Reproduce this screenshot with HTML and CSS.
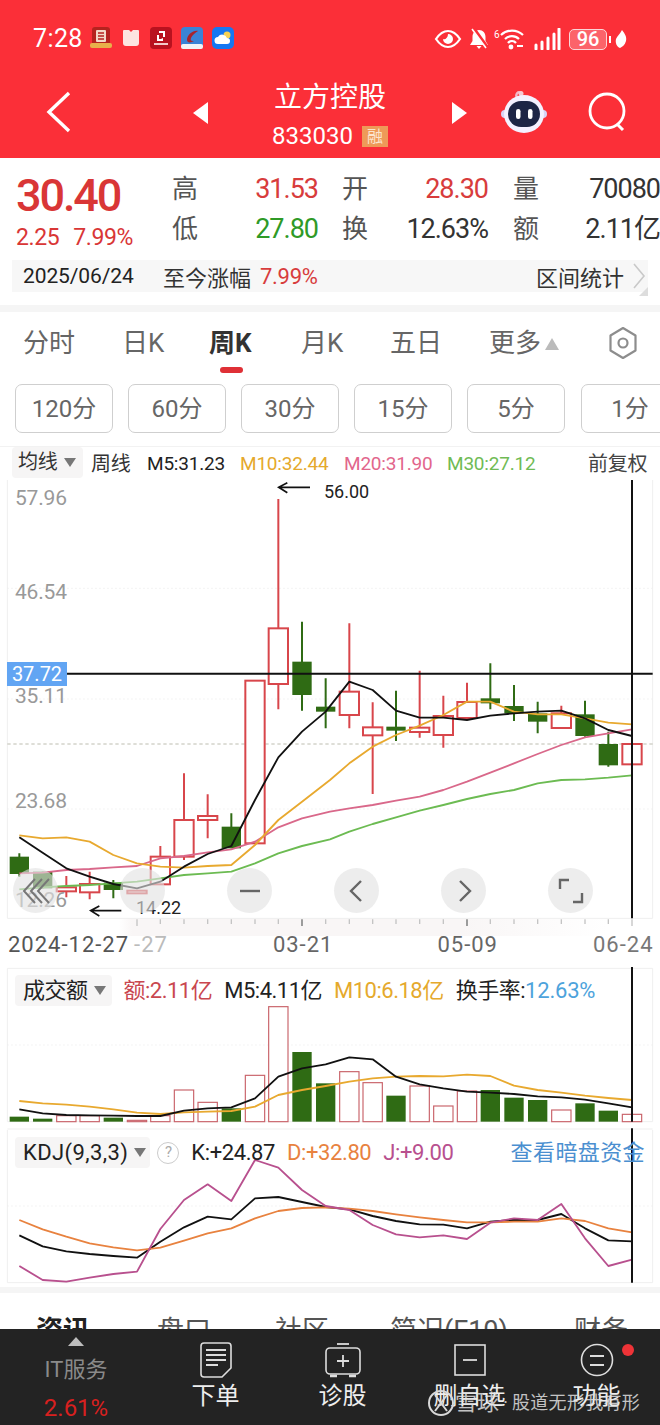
FILE: index.html
```html
<!DOCTYPE html>
<html lang="zh">
<head>
    <meta charset="UTF-8">
    <meta name="viewport" content="width=device-width, initial-scale=1.0">
    <title>立方控股</title>
    <link rel="stylesheet" href="styles.css">
</head>
<body>
<div class="screen">
    <header class="header">
        <div class="status">
            <span class="time">7:28</span>
            <div class="apps">
                <svg width="22" height="22" viewBox="0 0 22 22"><rect x="2" y="0" width="18" height="20" rx="3" fill="#b5231f"/><rect x="6" y="3" width="10" height="12" rx="1" fill="#f3d9c8"/><path d="M8 6h6M8 9h6M8 12h6" stroke="#b5231f" stroke-width="1.4"/><rect x="0" y="16" width="22" height="5" rx="2" fill="#e8b04a"/></svg>
                <svg width="20" height="20" viewBox="0 0 20 20"><path d="M3 2h5l2 2 2-2h5a1 1 0 0 1 1 1v12a3 3 0 0 1-3 3H5a3 3 0 0 1-3-3V3a1 1 0 0 1 1-1Z" fill="#fde4e0"/></svg>
                <svg width="22" height="22" viewBox="0 0 22 22"><rect width="22" height="22" rx="4" fill="#b9121f"/><path d="M9 4h6v6h-2V6H9ZM13 11v3H7V8h2v4h2" fill="#fff"/><path d="M4 17h14" stroke="#f4c9c9" stroke-width="2"/></svg>
                <svg width="22" height="22" viewBox="0 0 22 22"><rect width="22" height="22" rx="4" fill="#3a83d6"/><path d="M17 4C12 3 6 8 6 13c0 3 4 3 7 1-2 0-4 0-3-3 1-3 4-5 7-7Z" fill="#a8242c"/><rect y="17" width="22" height="5" rx="2" fill="#f2f4f7"/></svg>
                <svg width="22" height="22" viewBox="0 0 22 22"><rect width="22" height="22" rx="5" fill="#1677f2"/><circle cx="15" cy="8" r="3.5" fill="#f7d154"/><path d="M6 17a3.500 3.500 0 0 1 0-7 5 5 0 0 1 9 1 3 3 0 0 1 0 6Z" fill="#fff"/></svg>
            </div>
            <div class="sys-icons">
                <svg class="eye" width="28" height="20" viewBox="0 0 28 20"><path d="M2 10C6 4 10 2 14 2s8 2 12 8c-4 6-8 8-12 8S6 16 2 10Z" fill="none" stroke="#fff" stroke-width="2.2"/><path d="M14 5a5 5 0 1 1-5 5c2 1 5-1 5-5Z" fill="#fff"/></svg>
                <svg class="bell" width="20" height="22" viewBox="0 0 20 22"><path d="M10 2c4 0 6.500 3 6.500 7v4l2.500 4H1l2.500-4V9C3.500 5 6 2 10 2Z" fill="#fff"/><path d="M7.500 18h5l-2.500 3Z" fill="#fff"/><path d="M5 1l13 18" stroke="#fb2f38" stroke-width="3.500"/><path d="M3 1l14 19" stroke="#fff" stroke-width="1.600"/></svg>
                <span class="wifi-six">6</span>
                <svg class="wifi" width="24" height="21" viewBox="0 0 24 21"><path d="M1 6a16 16 0 0 1 22 0M5 10a10 10 0 0 1 14 0M8 14a5 5 0 0 1 8 0" fill="none" stroke="#fff" stroke-width="2.2"/><circle cx="11" cy="18" r="2.400" fill="#fff"/><path d="M17 17h6" stroke="#fff" stroke-width="2"/></svg>
                <svg class="signal" width="27" height="22" viewBox="0 0 27 22"><path d="M2 17v4M8 14v7M14 10v11M20 6v15M25 1v20" stroke="#fff" stroke-width="3" stroke-linecap="round"/></svg>
                <span class="battery">96</span>
                <span class="battery-nub"></span>
                <svg class="leaf" width="12" height="20" viewBox="0 0 12 20"><path d="M7 1c3 4 5 7 4 11-1 4-4 6-6 7-3-1-5-5-4-9 1-3 4-5 6-9Z" fill="#fff"/></svg>
            </div>
        </div>
        <div class="nav">
            <svg class="back" width="26" height="42" viewBox="0 0 26 42"><path d="M23 2 3 21l20 19" fill="none" stroke="#fff" stroke-width="3.4"/></svg>
            <span class="tri tri-left"></span>
            <div class="nav-title">
                <div class="stock-name">立方控股</div>
                <div class="stock-code">833030<span class="rong">融</span></div>
            </div>
            <span class="tri tri-right"></span>
            <svg class="robot" width="46" height="44" viewBox="0 0 46 44">
                <path d="M16 8c-2-4 1-7 4-5" fill="none" stroke="#f2b8c8" stroke-width="2.4"/>
                <circle cx="20" cy="3.500" r="2.500" fill="#f6c9d4"/>
                <circle cx="4" cy="24" r="4" fill="#d9d4f6"/>
                <circle cx="42" cy="24" r="4" fill="#d9d4f6"/>
                <ellipse cx="23" cy="24" rx="20" ry="19" fill="#f4f1ff"/>
                <rect x="7" y="11" width="32" height="26" rx="13" fill="#1d2545"/>
                <rect x="15" y="19" width="4.500" height="10" rx="2.200" fill="#fff"/>
                <rect x="27" y="19" width="4.500" height="10" rx="2.200" fill="#fff"/>
            </svg>
            <svg class="search" width="42" height="42" viewBox="0 0 42 42"><circle cx="19" cy="19" r="17" fill="none" stroke="#fff" stroke-width="2.8"/><path d="M29 32l6 6" stroke="#fff" stroke-width="3"/></svg>
        </div>
    </header>

    <section class="quote">
        <div class="quote-top">
            <div class="price">
                <div class="price-now">30.40</div>
                <div class="price-chg"><span>2.25</span><span>7.99%</span></div>
            </div>
            <div class="stats">
                <span class="lbl">高</span><span class="val red">31.53</span>
                <span class="lbl">开</span><span class="val red">28.30</span>
                <span class="lbl">量</span><span class="val">70080</span>
                <span class="lbl">低</span><span class="val green">27.80</span>
                <span class="lbl">换</span><span class="val">12.63%</span>
                <span class="lbl">额</span><span class="val">2.11亿</span>
            </div>
        </div>
        <div class="range">
            <span class="range-date">2025/06/24</span>
            <span class="range-label">至今涨幅</span>
            <span class="range-pct">7.99%</span>
            <span class="range-link">区间统计</span>
            <svg class="range-arrow" width="14" height="28" viewBox="0 0 14 28"><path d="M2 2l10 12L2 26" fill="none" stroke="#c9c9c9" stroke-width="1.6"/></svg>
            <span class="range-corner"></span>
        </div>
    </section>

    <div class="strip"></div>

    <nav class="tabs">
        <span class="tab tab-1">分时</span>
        <span class="tab tab-2">日K</span>
        <span class="tab tab-3 tab-active">周K</span>
        <span class="tab tab-4">月K</span>
        <span class="tab tab-5">五日</span>
        <span class="tab tab-6">更多</span>
        <span class="tab-up"></span>
        <svg class="tab-hex" width="30" height="34" viewBox="0 0 30 34"><path d="M15 2l12.500 7.500v15L15 32 2.500 24.500v-15Z" fill="none" stroke="#8d8d8d" stroke-width="2.2" stroke-linejoin="round"/><circle cx="15" cy="17" r="4.500" fill="none" stroke="#8d8d8d" stroke-width="2.2"/></svg>
    </nav>

    <div class="periods">
        <span class="period">120分</span>
        <span class="period">60分</span>
        <span class="period">30分</span>
        <span class="period">15分</span>
        <span class="period">5分</span>
        <span class="period">1分</span>
    </div>

    <div class="legend">
        <span class="drop">均线<i class="caret"></i></span>
        <span class="leg-week">周线</span>
        <span class="leg-m5">M5:31.23</span>
        <span class="leg-m10 c-orange">M10:32.44</span>
        <span class="leg-m20 c-pink">M20:31.90</span>
        <span class="leg-m30 c-lime">M30:27.12</span>
        <span class="leg-fq">前复权</span>
    </div>

    <section class="chart">
        <svg class="chart-svg" width="660" height="446" viewBox="0 0 1980 1338">
            <path class="frame" d="M22 0V1315H1958V0"/>
            <path class="grid" d="M22 325H1958M22 657H1958M22 987H1958"/>
            <path class="last" d="M22 792H1958"/>
            <path class="wick-g" d="M58 1120V1190M128 1175V1225M340 1200V1255M694 1000V1105M906 425V692M977 595V745M1188 632V783M1471 550V688M1542 615V723M1613 665V760M1755 662V770M1825 755V860"/>
            <path class="wick-r" d="M199 1188V1252M269 1175V1258M481 1098V1215M552 880V1140M623 943V1075M835 57V688M1048 430V745M1118 667V942M1259 572V773M1330 647V803M1401 608V718M1684 677V744"/>
            <g class="up">
                <rect x="170" y="1222" width="58" height="12"/><rect x="240" y="1212" width="58" height="25"/>
                <rect x="382" y="1232" width="58" height="8"/><rect x="452" y="1130" width="58" height="83"/>
                <rect x="523" y="1020" width="58" height="110"/><rect x="594" y="1008" width="58" height="12"/>
                <rect x="736" y="602" width="58" height="488"/><rect x="806" y="445" width="58" height="167"/>
                <rect x="1019" y="635" width="58" height="70"/><rect x="1089" y="742" width="58" height="24"/>
                <rect x="1230" y="743" width="58" height="13"/><rect x="1301" y="708" width="58" height="57"/>
                <rect x="1372" y="666" width="58" height="48"/><rect x="1655" y="700" width="58" height="44"/>
                <rect x="1867" y="792" width="58" height="61"/>
            </g>
            <g class="down">
                <rect x="29" y="1130" width="58" height="52"/><rect x="99" y="1175" width="58" height="50"/>
                <rect x="311" y="1208" width="58" height="22"/><rect x="665" y="1040" width="58" height="65"/>
                <rect x="877" y="545" width="58" height="100"/><rect x="948" y="680" width="58" height="15"/>
                <rect x="1159" y="740" width="58" height="12"/><rect x="1442" y="655" width="58" height="15"/>
                <rect x="1513" y="678" width="58" height="22"/><rect x="1584" y="700" width="58" height="25"/>
                <rect x="1726" y="703" width="58" height="65"/><rect x="1796" y="792" width="58" height="64"/>
            </g>
            <polyline class="ma ma-lime" points="58,1228 128,1222 199,1218 269,1215 340,1210 411,1205 481,1195 552,1185 623,1180 694,1175 765,1150 835,1120 906,1098 990,1078 1048,1055 1118,1032 1188,1012 1259,992 1330,975 1401,957 1471,942 1542,930 1613,910 1684,900 1755,898 1825,893 1896,886"/>
            <polyline class="ma ma-pink" points="58,1180 128,1178 199,1170 269,1167 340,1162 411,1158 481,1135 552,1128 623,1117 694,1108 765,1085 835,1042 906,1015 990,995 1048,985 1118,975 1188,962 1259,950 1330,930 1401,905 1471,878 1542,850 1613,822 1684,795 1755,772 1825,760 1896,748"/>
            <polyline class="ma ma-orange" points="58,1066 128,1075 199,1072 269,1085 340,1125 411,1150 481,1160 552,1163 623,1158 694,1155 765,1095 835,1020 906,965 990,900 1048,850 1118,800 1188,765 1259,737 1330,705 1401,665 1471,665 1542,695 1613,703 1684,703 1755,715 1825,728 1896,733"/>
            <polyline class="ma ma-black" points="58,1072 128,1118 199,1165 269,1190 340,1212 411,1225 481,1205 552,1160 623,1122 694,1098 765,960 835,832 906,755 977,695 1048,605 1118,630 1188,692 1259,713 1330,713 1401,720 1471,707 1542,700 1613,695 1684,692 1755,715 1825,750 1896,768"/>
            <path class="cross" d="M200 581H1958M1896 0V1315"/>
            <path class="hand" d="M930 22H838M862 8 836 22 862 38"/>
            <path class="hand" d="M364 1292H272M298 1278 272 1292 298 1308"/>
            <path class="tick" d="M481 1318V1332M552 1318V1332M623 1318V1332M694 1318V1332M765 1318V1332M835 1318V1332M977 1318V1332M1048 1318V1332M1118 1318V1332M1188 1318V1332M1259 1318V1332M1330 1318V1332M1471 1318V1332M1542 1318V1332M1613 1318V1332M1684 1318V1332M1755 1318V1332M1825 1318V1332M1896 1318V1338M411 1318V1342"/>
            <path class="tick-major" d="M906 1318V1342M1401 1318V1342"/>
        </svg>
        <span class="y-label y-1">57.96</span>
        <span class="y-label y-2">46.54</span>
        <span class="y-label y-3">35.11</span>
        <span class="y-label y-4">23.68</span>
        <span class="y-label y-5">12.26</span>
        <span class="mark mark-high">56.00</span>
        <span class="mark mark-low">14.22</span>
        <span class="cross-label">37.72</span>
        <span class="round-btn rb-1"><svg width="30" height="30" viewBox="0 0 30 30"><path d="M14 3 3 15l11 12M21 3 10 15l11 12M28 3 17 15l11 12" fill="none" stroke="#777" stroke-width="2"/></svg></span>
        <span class="round-btn rb-2"></span>
        <span class="round-btn rb-3"><svg width="24" height="24" viewBox="0 0 24 24"><path d="M2 12h20" stroke="#666" stroke-width="2.400"/></svg></span>
        <span class="round-btn rb-4"><svg width="24" height="24" viewBox="0 0 24 24"><path d="M16 2 6 12l10 10" fill="none" stroke="#666" stroke-width="2.400"/></svg></span>
        <span class="round-btn rb-5"><svg width="24" height="24" viewBox="0 0 24 24"><path d="M8 2l10 10L8 22" fill="none" stroke="#666" stroke-width="2.400"/></svg></span>
        <span class="round-btn rb-6"><svg width="26" height="26" viewBox="0 0 26 26"><path d="M2 11V2h9M24 15v9h-9" fill="none" stroke="#666" stroke-width="2.400"/></svg></span>
    </section>

    <div class="dates">
        <span class="date-first">2024-12-27</span>
        <span class="date-faint">-27</span>
        <span class="date-a">03-21</span>
        <span class="date-b">05-09</span>
        <span class="date-c">06-24</span>
    </div>

    <section class="panel vol">
        <svg class="panel-svg" width="660" height="165" viewBox="0 0 1980 495">
            <path class="frame" d="M22 10H1958M22 10V470H1958V10M22 492H1958"/>
            <path class="grid" d="M22 240H1958"/>
            <g class="down">
                <rect x="29" y="455" width="58" height="15"/><rect x="99" y="461" width="58" height="9"/>
                <rect x="311" y="458" width="58" height="12"/><rect x="665" y="430" width="58" height="40"/>
                <rect x="877" y="261" width="58" height="209"/><rect x="948" y="355" width="58" height="115"/>
                <rect x="1159" y="392" width="58" height="78"/><rect x="1442" y="375" width="58" height="95"/>
                <rect x="1513" y="398" width="58" height="72"/><rect x="1584" y="405" width="58" height="65"/>
                <rect x="1726" y="415" width="58" height="55"/><rect x="1796" y="437" width="58" height="33"/>
            </g>
            <g class="up up-thin">
                <rect x="170" y="452" width="58" height="18"/><rect x="240" y="452" width="58" height="18"/>
                <rect x="382" y="466" width="58" height="4"/><rect x="452" y="452" width="58" height="18"/>
                <rect x="523" y="375" width="58" height="95"/><rect x="594" y="412" width="58" height="58"/>
                <rect x="736" y="331" width="58" height="139"/><rect x="806" y="125" width="58" height="345"/>
                <rect x="1019" y="320" width="58" height="150"/><rect x="1089" y="353" width="58" height="117"/>
                <rect x="1230" y="363" width="58" height="107"/><rect x="1301" y="423" width="58" height="47"/>
                <rect x="1372" y="378" width="58" height="92"/><rect x="1655" y="435" width="58" height="35"/>
                <rect x="1867" y="448" width="58" height="22"/>
            </g>
            <polyline class="ma ma-orange" points="58,408 128,415 199,419 269,425 340,433 411,443 481,447 552,442 623,440 694,438 765,425 835,390 906,375 977,363 1048,350 1118,340 1188,335 1259,333 1330,334 1401,329 1471,333 1542,362 1613,375 1684,383 1755,392 1825,399 1896,405"/>
            <polyline class="ma ma-black" points="58,433 128,445 199,450 269,451 340,452 411,453 481,453 552,437 623,430 694,427 765,400 835,335 906,310 977,298 1048,277 1118,283 1188,335 1259,358 1330,370 1401,380 1471,383 1542,387 1613,394 1684,397 1755,404 1825,415 1896,427"/>
            <path class="cross" d="M1896 6V470M1896 490V495"/>
        </svg>
        <div class="panel-legend">
            <span class="drop drop-vol">成交额<i class="caret"></i></span>
            <span class="c-red">额:2.11亿</span>
            <span>M5:4.11亿</span>
            <span class="c-orange">M10:6.18亿</span>
            <span>换手率:<em class="c-blue">12.63%</em></span>
        </div>
    </section>

    <section class="panel kdj">
        <svg class="panel-svg" width="660" height="157" viewBox="0 0 1980 471">
            <path class="frame" d="M22 0V458H1958V0"/>
            <path class="grid" d="M22 228H1958"/>
            <polyline class="ma ma-black" points="58,316 128,349 199,364 269,372 340,378 411,383 481,335 552,292 623,260 694,268 765,205 835,201 906,216 977,231 1048,238 1118,258 1188,273 1259,283 1330,284 1401,295 1471,275 1542,270 1613,270 1684,252 1755,295 1825,331 1896,334"/>
            <polyline class="ma ma-d" points="58,270 128,298 199,320 269,340 340,352 411,361 481,353 552,332 623,310 694,295 765,265 835,243 906,234 977,232 1048,236 1118,243 1188,253 1259,262 1330,270 1401,277 1471,277 1542,275 1613,275 1684,265 1755,273 1825,295 1896,307"/>
            <polyline class="ma ma-j" points="58,408 128,450 199,455 269,443 340,432 411,425 481,297 552,210 623,163 694,213 765,90 835,113 906,180 977,228 1048,240 1118,285 1188,313 1259,322 1330,316 1401,327 1471,278 1542,265 1613,270 1684,222 1755,325 1825,408 1896,389"/>
            <path class="cross" d="M1896 0V458"/>
        </svg>
        <div class="panel-legend kdj-legend">
            <span class="drop drop-kdj">KDJ(9,3,3)<i class="caret"></i></span>
            <span class="help">?</span>
            <span>K:+24.87</span>
            <span class="c-d">D:+32.80</span>
            <span class="c-j">J:+9.00</span>
            <span class="dark-pool">查看暗盘资金</span>
        </div>
    </section>

    <div class="strip strip-low"></div>

    <div class="news-tabs">
        <span class="news-tab news-1">资讯</span>
        <span class="news-tab news-2">盘口</span>
        <span class="news-tab news-3">社区</span>
        <span class="news-tab news-4">简况(F10)</span>
        <span class="news-tab news-5">财务</span>
    </div>

    <footer class="bottom">
        <div class="sector">
            <span class="sector-up"></span>
            <span class="sector-name">IT服务</span>
            <span class="sector-pct">2.61%</span>
        </div>
        <div class="action">
            <svg width="32" height="36" viewBox="0 0 32 36"><path d="M4 1h24a3 3 0 0 1 3 3v22l-9 9H4a3 3 0 0 1-3-3V4a3 3 0 0 1 3-3Z" fill="none" stroke="#ddd" stroke-width="1.600"/><path d="M6 8h20M6 13h20M6 18h20M6 23h12" stroke="#ddd" stroke-width="1.800"/></svg>
            <span>下单</span>
        </div>
        <div class="action">
            <svg width="38" height="36" viewBox="0 0 38 36"><path d="M13 2h12" stroke="#ddd" stroke-width="1.800"/><rect x="2" y="6" width="34" height="26" rx="4" fill="none" stroke="#ddd" stroke-width="1.600"/><path d="M19 13v12M13 19h12" stroke="#ddd" stroke-width="1.800"/><path d="M6 34h7M25 34h7" stroke="#ddd" stroke-width="2.400"/></svg>
            <span>诊股</span>
        </div>
        <div class="action">
            <svg width="32" height="36" viewBox="0 0 32 36"><rect x="1" y="3" width="30" height="30" fill="none" stroke="#ddd" stroke-width="1.600"/><path d="M9 18h14" stroke="#ddd" stroke-width="1.800"/></svg>
            <span>删自选</span>
        </div>
        <div class="action action-fn">
            <svg width="34" height="36" viewBox="0 0 34 36"><circle cx="17" cy="18" r="15.500" fill="none" stroke="#ddd" stroke-width="1.600"/><path d="M10 14h14M10 23h14" stroke="#ddd" stroke-width="1.800"/></svg>
            <span>功能</span>
            <i class="dot"></i>
        </div>
        <div class="watermark">
            <svg width="28" height="28" viewBox="0 0 28 28"><circle cx="14" cy="14" r="12" fill="none" stroke="#d8d8d8" stroke-width="2"/><path d="M8 6l12 16M20 6 8 22" stroke="#d8d8d8" stroke-width="2"/></svg>
            <span class="wm-brand">雪球</span><span class="wm-sep">·</span><span class="wm-user">股道无形我有形</span>
        </div>
    </footer>
</div>
</body>
</html>
```

FILE: styles.css
```css
* {
    box-sizing: border-box;
}
body {
    margin: 0;
    background: #fff;
    font-family: Roboto, "Noto Sans CJK SC", sans-serif;
    color: #222;
}
.screen {
    position: relative;
    width: 660px;
    height: 1425px;
    overflow: hidden;
    background: #fff;
}

/* header */
.header {
    height: 158px;
    background: #fb2f38;
    color: #fff;
}
.status {
    position: relative;
    display: flex;
    align-items: center;
    height: 76px;
    padding-left: 33px;
}
.time {
    font-size: 25px;
    width: 57px;
    letter-spacing: 0.4px;
}
.apps {
    display: flex;
    align-items: center;
    gap: 9px;
}
.sys-icons {
    position: absolute;
    left: 434px;
    top: 28px;
    display: flex;
    align-items: center;
    height: 22px;
}
.bell {
    margin-left: 7px;
}
.wifi-six {
    font-size: 10px;
    margin: -10px 0 0 5px;
    width: 6px;
}
.signal {
    margin-left: 10px;
}
.battery {
    margin-left: 8px;
    width: 38px;
    height: 21px;
    border: 1.5px solid #fbd5d7;
    border-radius: 5px;
    background: rgba(255, 255, 255, 0.25);
    font-size: 20px;
    font-weight: 500;
    line-height: 18px;
    text-align: center;
}
.battery-nub {
    width: 2px;
    height: 7px;
    margin-left: 2px;
    background: #fff;
}
.leaf {
    margin-left: 4px;
}
.nav {
    position: relative;
    height: 82px;
}
.back {
    position: absolute;
    left: 46px;
    top: 15px;
}
.tri {
    position: absolute;
    top: 26px;
    border-top: 11px solid transparent;
    border-bottom: 11px solid transparent;
}
.tri-left {
    left: 193px;
    border-right: 15px solid #fff;
}
.tri-right {
    left: 452px;
    border-left: 15px solid #fff;
}
.nav-title {
    width: 660px;
    text-align: center;
}
.stock-name {
    font-size: 28px;
    line-height: 42px;
    padding-top: 1px;
}
.stock-code {
    display: flex;
    justify-content: center;
    align-items: center;
    font-size: 24px;
    line-height: 34px;
}
.rong {
    width: 26px;
    height: 21px;
    margin-left: 9px;
    background: #ee9a58;
    color: #fbe4cf;
    font-size: 16px;
    line-height: 21px;
    text-align: center;
}
.robot {
    position: absolute;
    left: 501px;
    top: 14px;
}
.search {
    position: absolute;
    left: 588px;
    top: 16px;
}

/* quote block */
.quote {
    height: 147px;
    padding-top: 14px;
}
.quote-top {
    display: flex;
    height: 88px;
}
.price {
    width: 172px;
    padding-left: 16px;
    color: #d93636;
}
.price-now {
    font-size: 45px;
    font-weight: 500;
    line-height: 48px;
    letter-spacing: -2.1px;
}
.price-chg {
    display: flex;
    gap: 14px;
    margin-top: 3px;
    font-size: 23px;
    line-height: 30px;
    letter-spacing: -0.4px;
}
.stats {
    display: grid;
    grid-template-columns: 26px 120px 50px 120px 51px 121px;
    grid-template-rows: 40px 40px;
    align-items: center;
    width: 488px;
    margin-top: -3px;
}
.lbl {
    font-size: 26px;
    line-height: 40px;
    text-align: right;
    color: #555;
}
.val {
    font-size: 27px;
    line-height: 40px;
    text-align: right;
    letter-spacing: -1px;
    color: #333;
}
.stats .red {
    color: #d83c3c;
}
.stats .green {
    color: #2f9a27;
}
.range {
    position: relative;
    display: flex;
    align-items: center;
    height: 32px;
    margin: 0 12px;
    padding-left: 11px;
    background: #f7f7f7;
    font-size: 21px;
}
.range-date {
    width: 140px;
    letter-spacing: -0.1px;
}
.range-label {
    font-size: 22px;
    color: #333;
}
.range-pct {
    margin-left: 9px;
    color: #d83c3c;
    font-size: 22px;
    letter-spacing: -0.3px;
}
.range-link {
    margin-left: auto;
    margin-right: 8px;
    font-size: 22px;
    color: #333;
}
.range-arrow {
    margin-right: 2px;
}
.range-corner {
    position: absolute;
    right: 0;
    bottom: -4px;
    width: 0;
    height: 0;
    border-left: 9px solid transparent;
    border-bottom: 9px solid #ddd;
}
.strip {
    height: 7px;
    background: #f5f5f5;
}

/* period tabs */
.tabs {
    position: relative;
    height: 72px;
    font-size: 26px;
    color: #666;
}
.tab {
    position: absolute;
    top: 12px;
    line-height: 38px;
}
.tab-1 { left: 23px; }
.tab-2 { left: 122px; }
.tab-3 { left: 209px; }
.tab-4 { left: 301px; }
.tab-5 { left: 390px; }
.tab-6 { left: 489px; }
.tab-active {
    font-weight: 700;
    color: #333;
}
.tab-active::after {
    content: "";
    position: absolute;
    left: 11px;
    top: 43px;
    width: 23px;
    height: 6px;
    border-radius: 3px;
    background: #df3036;
}
.tab-up {
    position: absolute;
    left: 545px;
    top: 26px;
    border-left: 7.5px solid transparent;
    border-right: 7.5px solid transparent;
    border-bottom: 12px solid #bbb;
}
.tab-hex {
    position: absolute;
    left: 608px;
    top: 14px;
}
.periods {
    display: flex;
    gap: 15px;
    height: 50px;
    padding-left: 15px;
}
.period {
    flex: none;
    width: 98px;
    height: 49px;
    border: 1px solid #cfcfcf;
    border-radius: 7px;
    font-size: 24px;
    line-height: 49px;
    text-align: center;
    color: #666;
}
.period:nth-child(6) {
    margin-left: 1px;
}

/* moving average legend */
.legend {
    position: relative;
    height: 34px;
    margin-top: 12px;
    border-top: 1px solid #f2f2f2;
    font-size: 19px;
    line-height: 34px;
    color: #333;
}
.legend span {
    position: absolute;
    top: 0;
    letter-spacing: -0.2px;
}
.legend .drop {
    left: 12px;
    width: 71px;
    height: 31px;
    padding-left: 6px;
    font-size: 20px;
    line-height: 31px;
}
.drop {
    display: flex;
    align-items: center;
    border-radius: 4px;
    background: #f6f5f5;
}
.caret {
    margin-left: 6px;
    border-left: 6px solid transparent;
    border-right: 6px solid transparent;
    border-top: 9px solid #777;
}
.leg-week { left: 91px; font-size: 20px; }
.leg-m5 { left: 147px; color: #222; }
.leg-m10 { left: 240px; }
.leg-m20 { left: 344px; }
.leg-m30 { left: 447px; }
.leg-fq { left: 588px; font-size: 20px; color: #444; }
.c-orange { color: #e5a92c; }
.c-pink { color: #e2668c; }
.c-lime { color: #6fbb55; }
.c-red { color: #c9474f; }
.c-blue { color: #4da3dc; font-style: normal; letter-spacing: -0.2px; }
.c-d { color: #e8823f; }
.c-j { color: #b8508e; }

/* chart shared strokes */
.chart {
    position: relative;
    height: 438px;
}
.chart-svg,
.panel-svg {
    position: absolute;
    left: 0;
    top: 0;
}
.frame {
    fill: none;
    stroke: #efefef;
    stroke-width: 3;
}
.grid {
    fill: none;
    stroke: #eeeeee;
    stroke-width: 3;
    stroke-dasharray: 4 8;
}
.last {
    fill: none;
    stroke: #bdbdb0;
    stroke-width: 3;
    stroke-dasharray: 10 8;
}
.wick-r {
    fill: none;
    stroke: #d8464b;
    stroke-width: 6;
}
.wick-g {
    fill: none;
    stroke: #2f6b14;
    stroke-width: 6;
}
.up rect {
    fill: #fff;
    stroke: #d8464b;
    stroke-width: 6;
}
.up-thin rect {
    stroke: #c9636a;
    stroke-width: 3.5;
}
.down rect {
    fill: #2f6b14;
}
.ma {
    fill: none;
    stroke-width: 5.5;
    stroke-linejoin: round;
}
.ma-black { stroke: #111; }
.ma-orange { stroke: #e8a92f; }
.ma-pink { stroke: #d9688a; }
.ma-lime { stroke: #6cbb52; }
.ma-d { stroke: #e8823f; }
.ma-j { stroke: #b8508e; }
.cross {
    fill: none;
    stroke: #111;
    stroke-width: 6;
}
.hand {
    fill: none;
    stroke: #111;
    stroke-width: 5;
}
.tick {
    fill: none;
    stroke: #c4c4c4;
    stroke-width: 4;
}
.tick-major {
    fill: none;
    stroke: #8a8a8a;
    stroke-width: 5;
}
.y-label {
    position: absolute;
    left: 15px;
    font-size: 21px;
    line-height: 24px;
    color: #999;
    letter-spacing: -0.2px;
}
.y-1 { top: 6px; }
.y-2 { top: 100px; }
.y-3 { top: 204px; }
.y-4 { top: 309px; }
.y-5 { top: 408px; }
.mark {
    position: absolute;
    font-size: 18px;
    line-height: 20px;
    color: #222;
}
.mark-high { left: 324px; top: 2px; }
.mark-low { left: 136px; top: 418px; }
.cross-label {
    position: absolute;
    left: 7px;
    top: 182px;
    width: 60px;
    height: 24px;
    background: #62a5f3;
    color: #fff;
    font-size: 20px;
    line-height: 24px;
    text-align: center;
}
.round-btn {
    position: absolute;
    top: 388px;
    display: flex;
    align-items: center;
    justify-content: center;
    width: 45px;
    height: 45px;
    border-radius: 50%;
    background: rgba(226, 226, 226, 0.62);
}
.rb-1 { left: 13px; }
.rb-2 { left: 120px; }
.rb-3 { left: 227px; }
.rb-4 { left: 334px; }
.rb-5 { left: 441px; }
.rb-6 { left: 548px; }

/* date axis */
.dates {
    display: flex;
    height: 47px;
    padding: 14px 0 0 8px;
    font-size: 22px;
    line-height: 26px;
    color: #666;
    letter-spacing: 1px;
    white-space: nowrap;
    background: linear-gradient(90deg, #fff 18%, #f9f6f6 20%, #f9f6f6 70%, #fff 92%) top / 100% 18px no-repeat;
}
.dates span {
    flex: none;
}
.date-first { color: #555; }
.date-faint {
    margin-left: 5px;
    color: #bbb;
}
.date-a { margin-left: 105px; }
.date-b { margin-left: 104px; }
.date-c { margin-left: 95px; color: #777; }

/* sub panels */
.panel {
    position: relative;
}
.vol {
    height: 165px;
}
.kdj {
    height: 157px;
}
.panel-legend {
    position: absolute;
    left: 15px;
    top: 10px;
    display: flex;
    align-items: center;
    gap: 12px;
    font-size: 22px;
    line-height: 31px;
    letter-spacing: -0.5px;
    color: #222;
    white-space: nowrap;
}
.panel-legend .drop {
    height: 31px;
    padding: 0 6px 0 8px;
}
.kdj-legend {
    top: 7px;
    width: 630px;
    letter-spacing: -0.4px;
}
.panel-legend .drop-kdj {
    padding-right: 4px;
    letter-spacing: 0.4px;
}
.drop-vol .caret,
.drop-kdj .caret {
    margin-left: 6px;
}
.help {
    width: 22px;
    height: 22px;
    margin-left: -5px;
    border: 1.5px solid #ccc;
    border-radius: 50%;
    font-size: 15px;
    line-height: 19px;
    text-align: center;
    color: #aaa;
}
.dark-pool {
    margin-left: auto;
    letter-spacing: 0.4px;
    color: #4b8fd0;
}
.strip-low {
    height: 6px;
}
.news-tabs {
    position: relative;
    height: 36px;
    font-size: 27px;
    color: #555;
}
.news-tab {
    position: absolute;
    top: 20px;
    line-height: 36px;
    white-space: nowrap;
}
.news-1 { left: 36px; font-weight: 700; color: #222; }
.news-2 { left: 157px; }
.news-3 { left: 275px; }
.news-4 { left: 390px; }
.news-5 { left: 574px; }

/* bottom bar */
.bottom {
    position: absolute;
    left: 0;
    right: 0;
    bottom: 0;
    display: grid;
    grid-template-columns: 152px repeat(4, 127px);
    height: 96px;
    background: #232323;
    color: #eee;
}
.sector {
    display: flex;
    flex-direction: column;
    align-items: center;
    padding-top: 8px;
}
.sector-up {
    border-left: 8px solid transparent;
    border-right: 8px solid transparent;
    border-bottom: 9px solid #bdbdbd;
}
.sector-name {
    margin-top: 11px;
    font-size: 22px;
    line-height: 26px;
    color: #8a8a8a;
}
.sector-pct {
    margin-top: 12px;
    font-size: 24px;
    line-height: 26px;
    color: #d8201f;
}
.action {
    position: relative;
    display: flex;
    flex-direction: column;
    align-items: center;
    padding-top: 13px;
    font-size: 24px;
    line-height: 36px;
}
.dot {
    position: absolute;
    left: 89px;
    top: 15px;
    width: 12px;
    height: 12px;
    border-radius: 50%;
    background: #ee3337;
}
.watermark {
    position: absolute;
    left: 427px;
    top: 60px;
    display: flex;
    align-items: center;
    font-size: 18px;
    line-height: 28px;
    color: rgba(225, 225, 225, 0.85);
}
.wm-brand {
    font-size: 22px;
}
.wm-sep {
    width: 13px;
    text-align: center;
}
.wm-user {
    letter-spacing: 0.3px;
}
```
